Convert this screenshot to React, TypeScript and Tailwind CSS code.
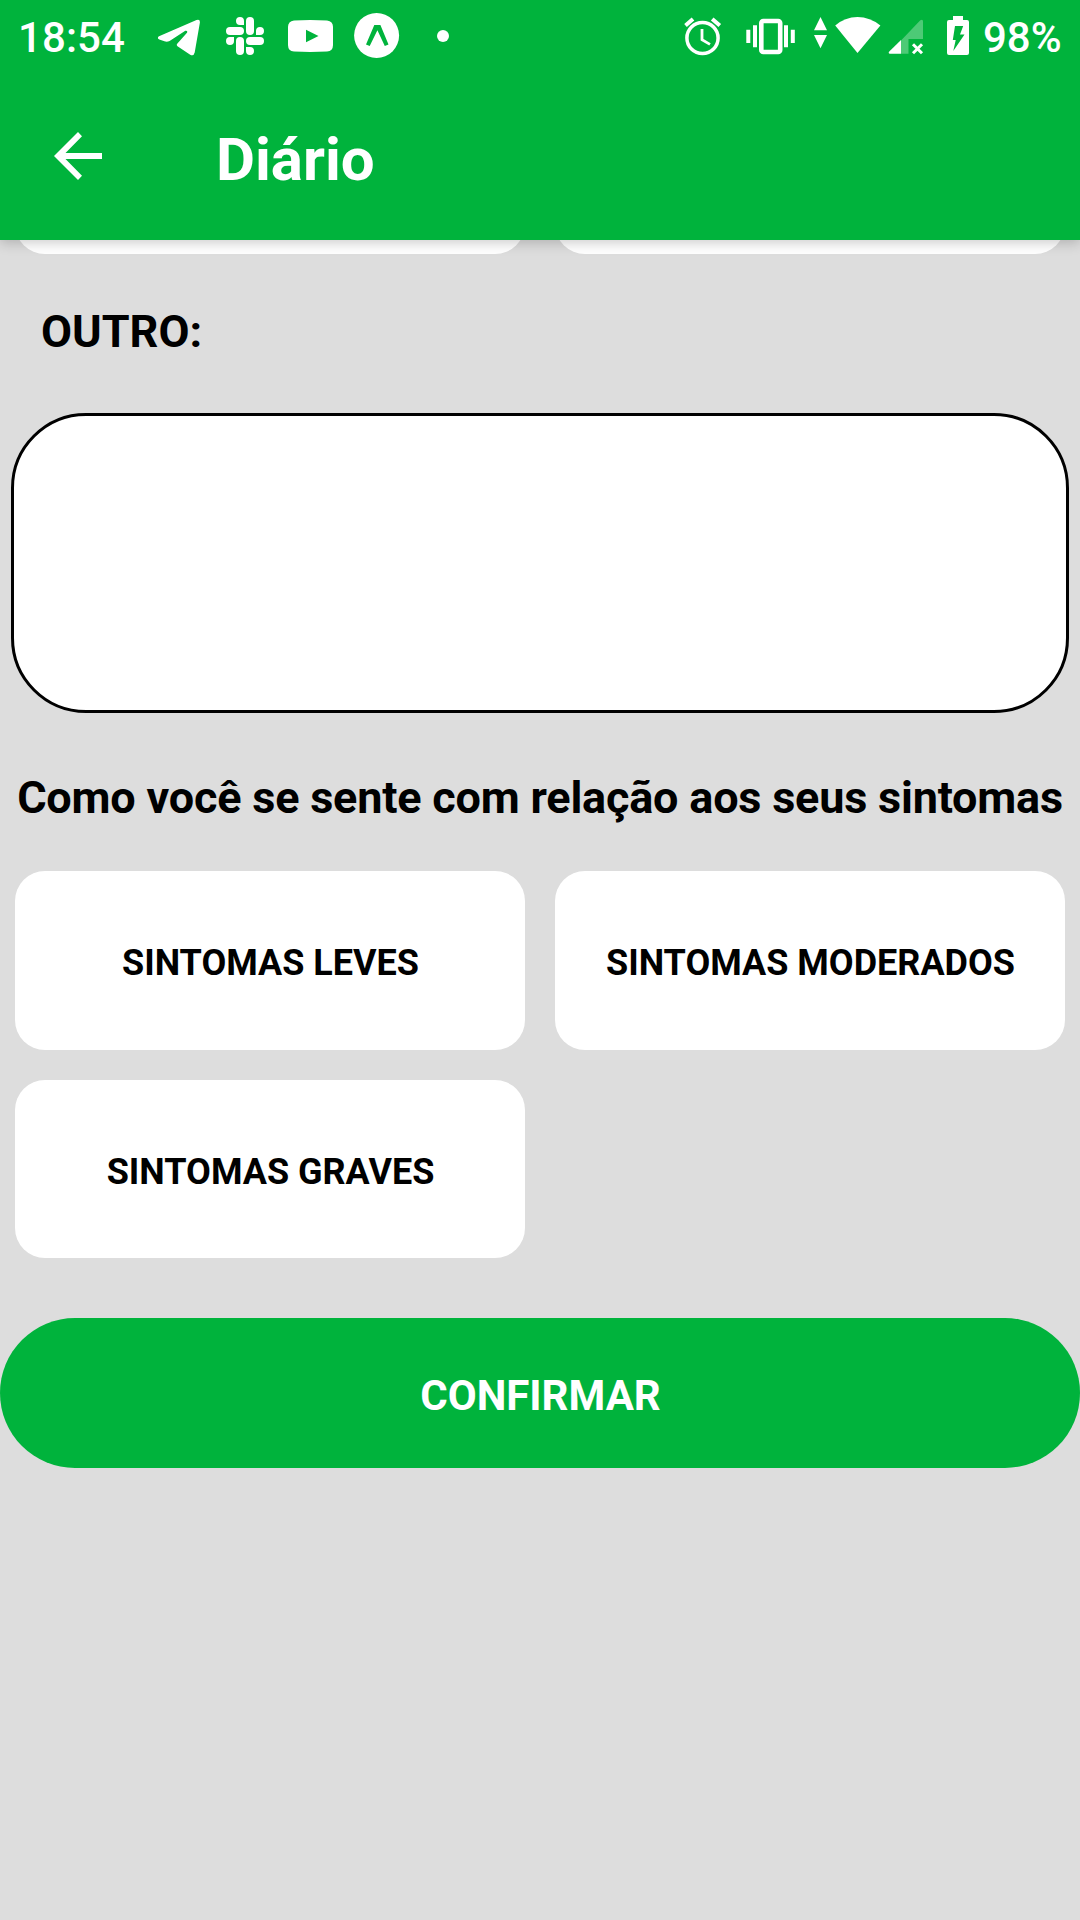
import type { ReactNode } from "react";

function StatusIcon({ x, width, children }: { x: number; width: number; children: ReactNode }) {
  return (
    <svg width={width} height={72} viewBox={`${x} 0 ${width} 72`} fill="#fff" className="shrink-0">
      {children}
    </svg>
  );
}

function StatusBar() {
  return (
    <div className="flex h-[72px] items-center text-[42px] leading-[72px] font-medium">
      <span className="w-[158px] shrink-0 pt-[3px] pl-[18px] tracking-[0.1px]">18:54</span>

      {/* telegram */}
      <StatusIcon x={158} width={68}>
        <path d="M159 36.3 196.5 20.1Q200.2 18.9 199.9 22.5L194.7 52.5Q193.8 56.4 190.2 54.7L177.5 46.2Q176.2 45 177.2 43.8L187 32.7Q188 30.5 185.3 30.8L169.6 40.9Q167 42.2 164.4 41.3L159.3 39.4Q156.5 38 159 36.3Z" />
      </StatusIcon>

      {/* slack */}
      <StatusIcon x={226} width={62}>
        <rect x="226" y="27" width="18" height="8" rx="4" />
        <rect x="246" y="37" width="18" height="8" rx="4" />
        <rect x="246" y="17" width="8" height="18" rx="4" />
        <rect x="236" y="37" width="8" height="18" rx="4" />
        <path d="M244 25V21a4 4 0 1 0-4 4ZM256 35H260a4 4 0 1 0-4-4ZM246 47V51a4 4 0 1 0 4-4ZM234 37H230a4 4 0 1 0 4 4Z" />
      </StatusIcon>

      {/* youtube */}
      <StatusIcon x={288} width={66}>
        <path d="M294 20.4Q310 19.6 327 20.4Q333 21 333 27V45Q333 51 327 51.6Q310 52.4 294 51.6Q288 51 288 45V27Q288 21 294 20.4Z" />
        <path d="M306 29.7V42.2L318.5 36Z" fill="#00b33c" />
      </StatusIcon>

      {/* expo */}
      <StatusIcon x={354} width={82}>
        <circle cx="376.6" cy="35.5" r="22.5" />
        <path d="M374.3 25H380.4L388.5 44.4L384.8 46L377.4 30.2L369.7 46L366 44.4Z" fill="#00b33c" />
      </StatusIcon>

      <StatusIcon x={436} width={248}>
        <circle cx="443" cy="36" r="6" />
      </StatusIcon>

      {/* alarm */}
      <StatusIcon x={684} width={62}>
        <g fill="none" stroke="#fff">
          <circle cx="702.5" cy="38" r="15.6" strokeWidth="3.5" />
          <path d="M685.5 25.5 693 19M719.8 25.5 712.2 19" strokeWidth="4" />
          <path d="M702 29V39.8L710 44.4" strokeWidth="2.8" />
        </g>
      </StatusIcon>

      {/* vibrate */}
      <StatusIcon x={746} width={68}>
        <rect x="761.3" y="21" width="18.9" height="31" rx="2" fill="none" stroke="#fff" strokeWidth="4.6" />
        <path d="M746.3 29.7H750.3V43H746.3ZM753 25.3H757V47.3H753ZM784 25.3H788V47.3H784ZM790.8 29.7H794.8V43H790.8Z" />
      </StatusIcon>

      {/* data arrows */}
      <StatusIcon x={814} width={20}>
        <path d="M814 30.3H827L820.5 17ZM814 35H827L820.5 48.3Z" />
      </StatusIcon>

      {/* wifi */}
      <StatusIcon x={834} width={54}>
        <path d="M857.5 53 835.2 25.5Q845 17 857.5 17T880.4 25.5Z" />
      </StatusIcon>

      {/* mobile signal */}
      <StatusIcon x={888} width={59}>
        <path d="M901 40.5 920.3 20.3Q923 18.5 923 21.5V39H908.5V53.7H901Z" fillOpacity="0.3" />
        <path d="M901 40V53.7H890Q887.7 53.2 889.5 51.2Z" />
        <path d="M913 44.2 922 53.2M922 44.2 913 53.2" stroke="#fff" strokeWidth="3" />
      </StatusIcon>

      {/* battery */}
      <StatusIcon x={947} width={36}>
        <path d="M953 16H963V20H967Q969 20 969 22V53Q969 55 967 55H949Q947 55 947 53V22Q947 20 949 20H953Z" />
        <path d="M955 26H963.2L960 34.5H964.5L953.3 51L955.7 40H952.8Z" fill="#00b33c" />
      </StatusIcon>

      <span className="pt-[3px]">98%</span>
    </div>
  );
}

function Header() {
  return (
    <header className="relative z-10 h-60 bg-[#00b33c] text-white shadow-[0_3px_12px_rgba(0,0,0,0.2)]">
      <StatusBar />
      <div className="flex h-[168px] items-start pl-[54px]">
        <svg width="48" height="48" viewBox="0 0 48 48" className="mt-[60px] shrink-0" fill="#fff">
          <path d="M48 21H11.5L28 4.2L24 0L0 24L24 48L28 43.8L11.5 27H48Z" />
        </svg>
        <h1 className="mt-[52px] ml-[114px] text-[60px] leading-[71px] font-bold">Diário</h1>
      </div>
    </header>
  );
}

function SymptomCard({ label }: { label: string }) {
  return (
    <button className="rounded-[30px] bg-white pt-[5px] pl-px text-center text-4xl font-bold">
      {label}
    </button>
  );
}

const levels = ["SINTOMAS LEVES", "SINTOMAS MODERADOS", "SINTOMAS GRAVES"];

export default function App() {
  return (
    <div className="h-[1920px] w-[1080px] overflow-hidden bg-[#dddddd] font-['Roboto',sans-serif] text-black">
      <Header />

      <main className="flex flex-col">
        {/* bottom edge of the list scrolled under the header */}
        <div className="-mt-[26px] grid grid-cols-2 gap-[30px] px-[15px]">
          <div className="h-10 rounded-b-[30px] bg-white" />
          <div className="h-10 rounded-b-[30px] bg-white" />
        </div>

        <h2 className="mt-[52px] ml-[41px] text-[45px] leading-[52px] font-bold">OUTRO:</h2>

        <textarea className="mx-[11px] mt-[55px] block h-[300px] resize-none rounded-[75px] border-3 border-black bg-white px-10 py-8 text-4xl outline-none" />

        <h2 className="mt-[59px] text-center text-[45px] leading-[52px] font-bold tracking-[-0.21px] whitespace-nowrap">
          Como você se sente com relação aos seus sintomas
        </h2>

        <div className="mt-[47px] grid grid-cols-2 grid-rows-[179px_178px] gap-[30px] px-[15px]">
          {levels.map((label) => (
            <SymptomCard key={label} label={label} />
          ))}
        </div>

        <button className="mt-[60px] h-[150px] w-full rounded-[75px] bg-[#00b33c] pt-1 pl-px text-[42px] font-bold text-white">
          CONFIRMAR
        </button>
      </main>
    </div>
  );
}
